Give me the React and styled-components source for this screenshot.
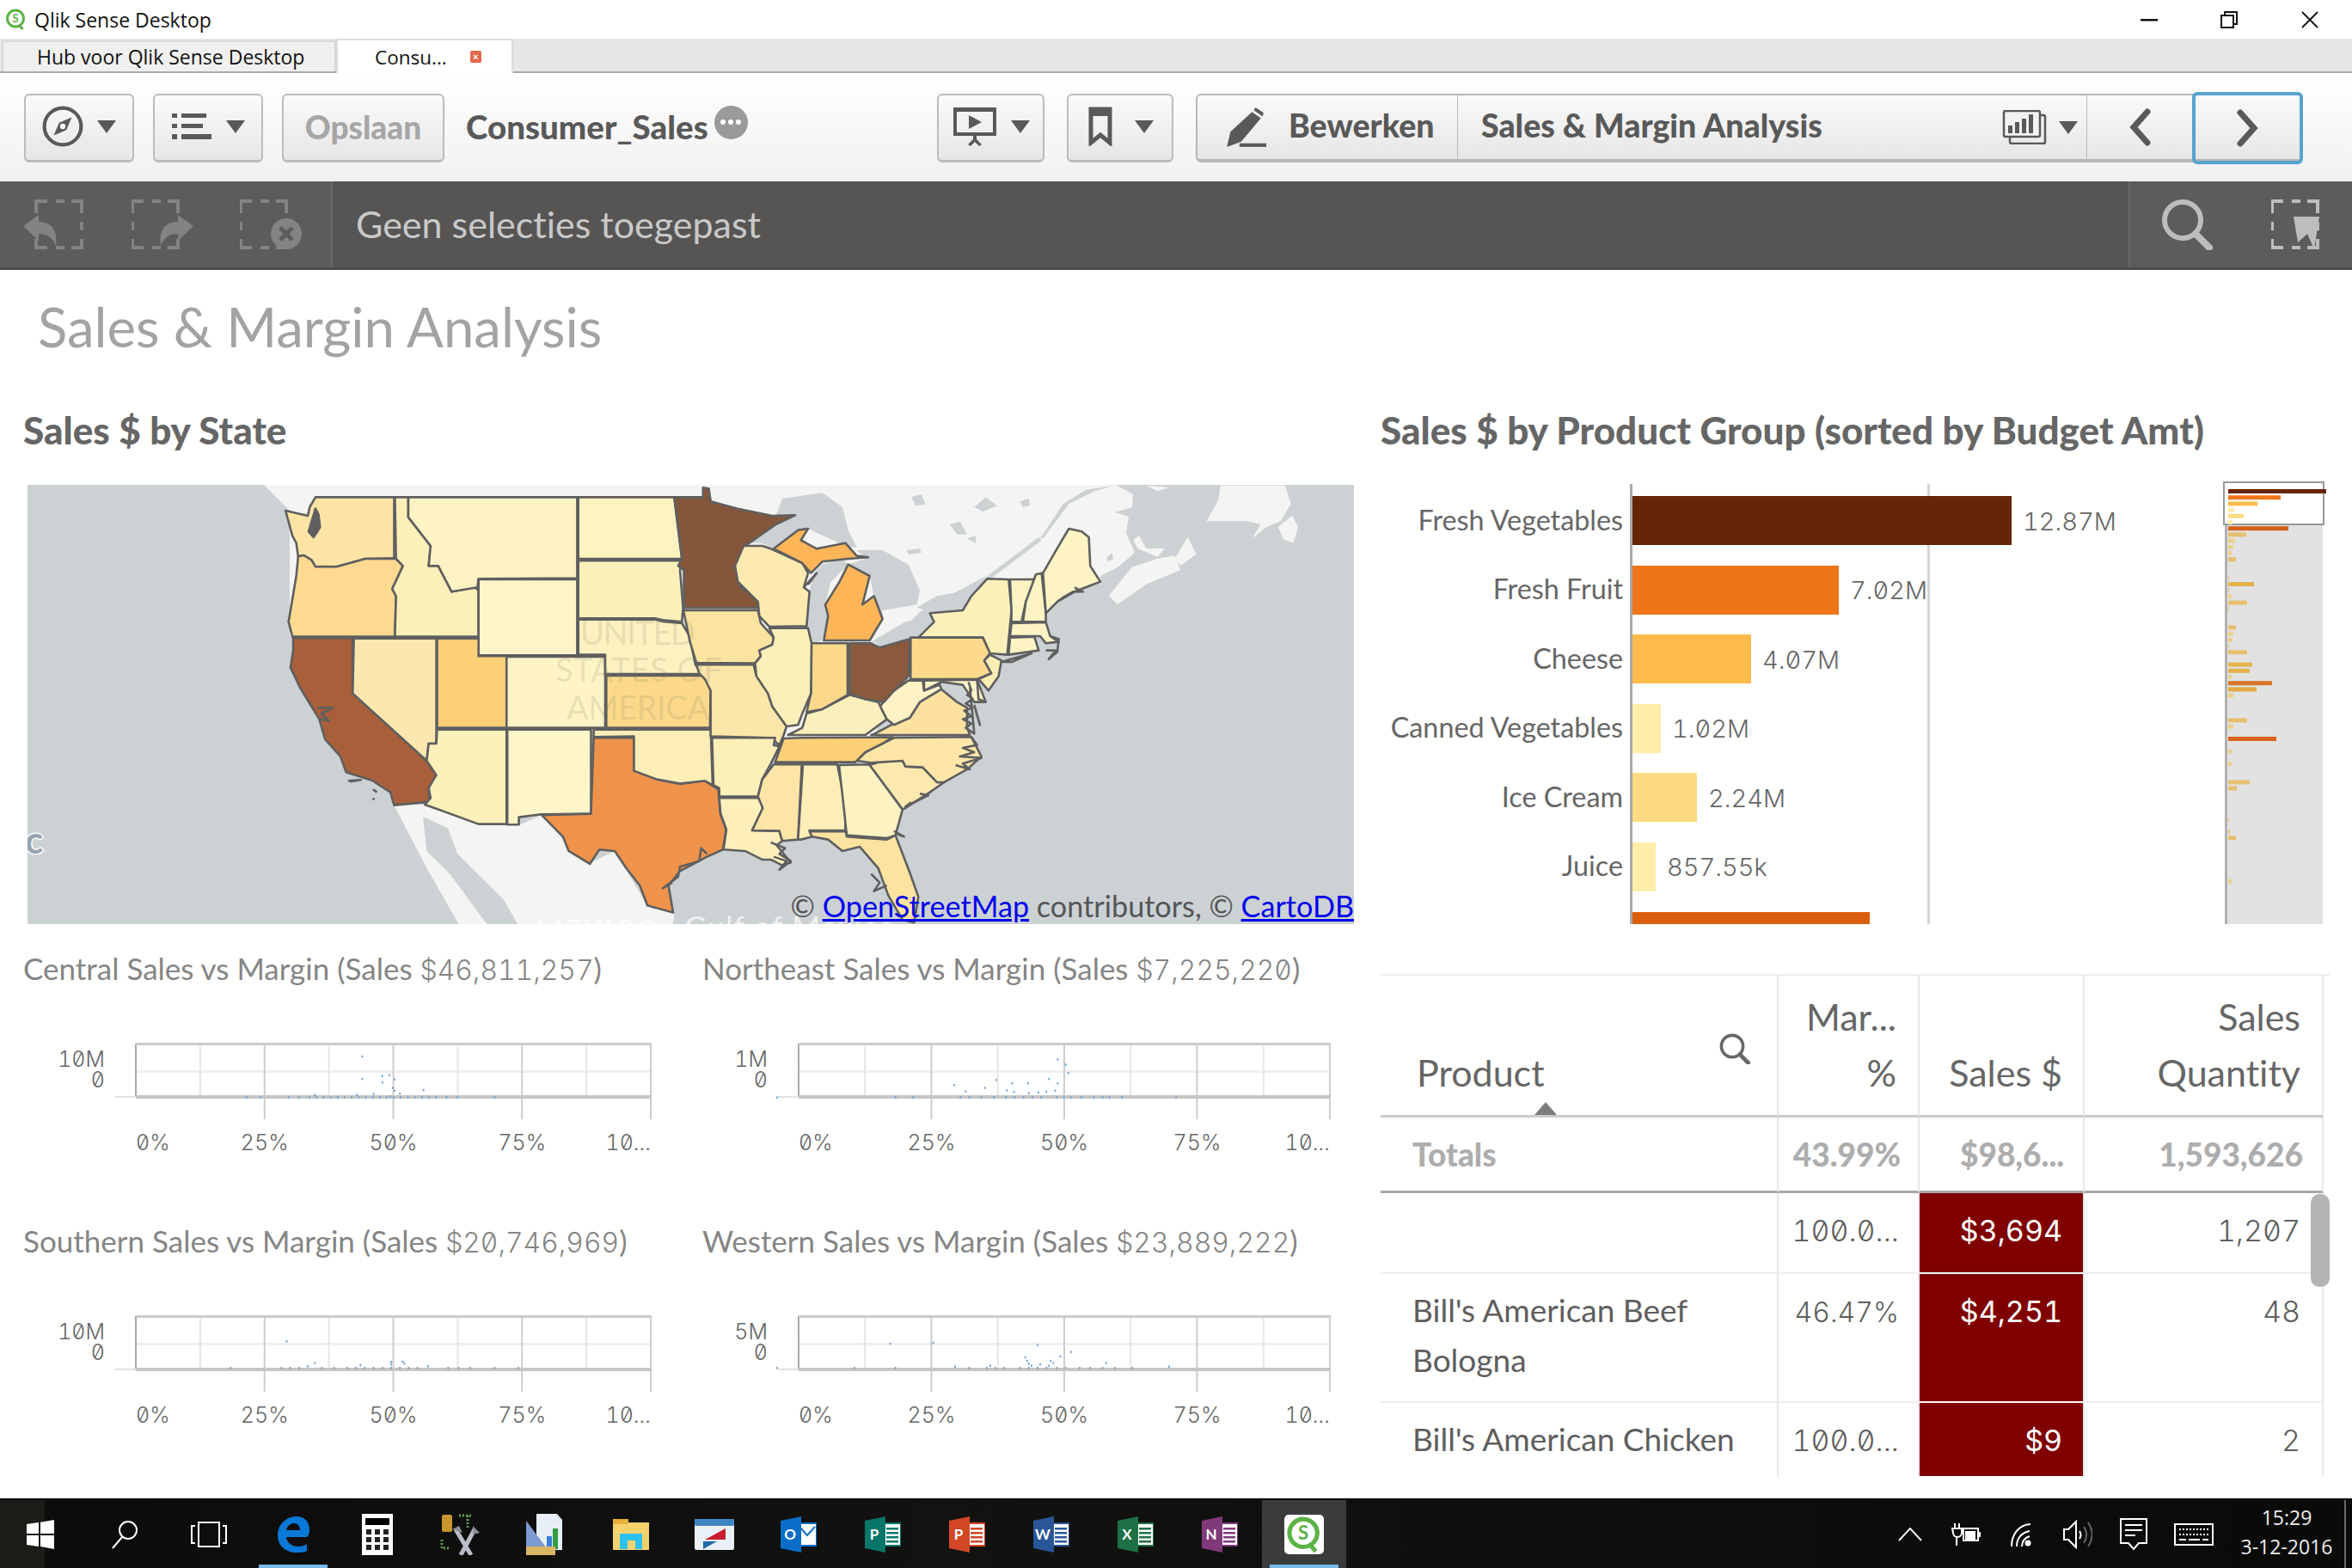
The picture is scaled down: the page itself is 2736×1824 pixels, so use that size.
import React from "react";
import styled, { createGlobalStyle } from "styled-components";

const GlobalStyle = createGlobalStyle`
  html, body {
    margin: 0;
    padding: 0;
    background: #fff;
  }
  * {
    box-sizing: border-box;
  }
`;

const SANS = `Lato, "Noto Sans", sans-serif`;
const NUMS = `Inter, "DejaVu Sans", sans-serif`;

const Root = styled.div`
  width: 2736px;
  height: 1824px;
  display: flex;
  flex-direction: column;
  overflow: hidden;
  font-family: ${SANS};
  font-variant-ligatures: none;
  color: #666;
`;

const Num = styled.span`
  font-family: ${NUMS};
  font-variant-numeric: tabular-nums slashed-zero;
  font-feature-settings: "zero", "tnum";
  font-size: ${(p) => p.$size || "0.91em"};
  font-weight: ${(p) => p.$weight || 300};
`;

/* window chrome */
const TitleBar = styled.div`
  height: 45px;
  flex: none;
  display: flex;
  align-items: center;
  padding-left: 5px;
  background: #fff;
  position: relative;
`;
const TitleText = styled.span`
  font-family: "Open Sans", sans-serif;
  font-size: 23px;
  color: #111;
  margin-left: 8px;
`;
const WinButtons = styled.div`
  margin-left: auto;
  display: flex;
  align-items: center;
  gap: 73px;
  padding-right: 38px;
`;
const TabBar = styled.div`
  height: 40px;
  flex: none;
  display: flex;
  align-items: flex-end;
  background: #e6e6e6;
  border-bottom: 2px solid #a8a8a8;
  padding-left: 2px;
`;
const HubTab = styled.div`
  width: 389px;
  height: 36px;
  background: #f0f0f0;
  border: 2px solid #d6d6d6;
  border-bottom: none;
  margin-bottom: 0;
  padding-left: 39px;
  font-family: "Open Sans", sans-serif;
  font-size: 23px;
  line-height: 34px;
  color: #111;
`;
const ActiveTab = styled.div`
  width: 206px;
  height: 40px;
  background: #fff;
  margin-bottom: -2px;
  border: 2px solid #dcdcdc;
  border-bottom: none;
  display: flex;
  align-items: center;
  padding-left: 43px;
  font-family: "Open Sans", sans-serif;
  font-size: 22.5px;
  color: #111;
`;
const TabClose = styled.span`
  width: 13px;
  height: 14px;
  margin-left: 27px;
  border-radius: 2px;
  background: #e2684c;
  color: #fff;
  font: bold 11px/14px "Liberation Sans", sans-serif;
  text-align: center;
`;

/* toolbar */
const Toolbar = styled.div`
  height: 126px;
  flex: none;
  display: flex;
  align-items: center;
  padding: 2px 57px 0 28px;
  background: linear-gradient(#ffffff, #f1f1f1);
`;
const ToolButton = styled.div`
  width: ${(p) => p.$w}px;
  height: 80px;
  margin-right: ${(p) => p.$gap || 22}px;
  display: flex;
  align-items: center;
  justify-content: center;
  gap: ${(p) => p.$inner || 16}px;
  padding-bottom: 3px;
  border: 2px solid #bcbcbc;
  border-bottom-width: 3px;
  border-radius: 6px;
  background: linear-gradient(#fafafa, #e6e6e6);
`;
const Caret = styled.i`
  width: 0;
  height: 0;
  border-left: 11px solid transparent;
  border-right: 11px solid transparent;
  border-top: 15px solid #595959;
`;
const SaveLabel = styled.span`
  font-size: 37px;
  font-weight: 900;
  color: #a6a6a6;
`;
const AppName = styled.span`
  font-size: 38.500px;
  font-weight: 900;
  color: #595959;
  margin: -5px 0 0 3px;
`;
const MoreDots = styled.span`
  width: 39px;
  height: 39px;
  margin: -14px 0 0 7px;
  border-radius: 50%;
  background: #9a9a9a;
  display: flex;
  align-items: center;
  justify-content: center;
  gap: 3px;
`;
const Dot = styled.i`
  width: 6px;
  height: 6px;
  border-radius: 50%;
  background: #fff;
`;
const ToolSpacer = styled.div`
  flex: 1;
`;
const NavGroup = styled.div`
  height: 80px;
  display: flex;
  border: 2px solid #b8b8b8;
  border-bottom-width: 4px;
  border-radius: 6px;
  background: linear-gradient(#fafafa, #e6e6e6);
  margin-left: 4px;
`;
const NavCell = styled.div`
  width: ${(p) => p.$w}px;
  display: flex;
  align-items: center;
  justify-content: ${(p) => p.$justify || "center"};
  padding: ${(p) => p.$pad || 0};
  border-right: ${(p) => (p.$line ? "1px solid #bbb" : "none")};
  font-size: 37.500px;
  font-weight: 900;
  color: #595959;
`;
const NavText = styled.span`
  margin: -5px 0 0 ${(p) => p.$left || 0}px;
`;
const SheetPicker = styled.span`
  display: flex;
  align-items: center;
  gap: 14px;
`;
const NextCell = styled(NavCell)`
  height: 84px;
  margin: -4px -2px -4px 0;
  border: 4px solid #55a3cf;
  border-radius: 6px;
`;

/* current selections */
const SelectionBar = styled.div`
  height: 103px;
  flex: none;
  display: flex;
  background: #565554;
  border-bottom: 3px solid #4a4a49;
`;
const SelTools = styled.div`
  width: 387px;
  display: flex;
  align-items: center;
  gap: 54px;
  padding-left: 27px;
  border-right: 2px solid #676766;
  background: #5c5c5b;
`;
const SelText = styled.div`
  flex: 1;
  padding-left: 27px;
  font-size: 43px;
  line-height: 100px;
  color: #c9c9c9;
`;
const SelRight = styled.div`
  width: 260px;
  display: flex;
  align-items: center;
  gap: 68px;
  padding-left: 36px;
  border-left: 2px solid #676766;
  background: #5c5c5b;
`;

/* sheet */
const Sheet = styled.div`
  flex: 1;
  min-height: 0;
  background: #fff;
`;
const SheetTitle = styled.h1`
  height: 136px;
  margin: 0;
  padding-left: 44px;
  font-size: 63.5px;
  font-weight: 400;
  line-height: 132px;
  color: #a3a3a3;
`;
const Columns = styled.div`
  display: flex;
  gap: 31px;
  padding-left: 27px;
`;
const LeftCol = styled.div`
  width: 1548px;
`;
const RightCol = styled.div`
  width: 1104px;
`;
const ChartTitle = styled.h2`
  height: 113px;
  margin: 0;
  font-size: 44px;
  font-weight: 900;
  line-height: 100px;
  color: #666;
`;
const MapFrame = styled.div`
  position: relative;
  width: 1543px;
  height: 511px;
  margin: 1px 0 0 5px;
  overflow: hidden;
  background: #ccd1d4;
`;
const Attribution = styled.div`
  position: absolute;
  right: 0;
  bottom: 0;
  font-size: 34.2px;
  line-height: 42px;
  color: #555;
  white-space: nowrap;
  a {
    color: #0000ee;
    text-decoration: underline;
  }
`;
const ScatterGrid = styled.div`
  display: grid;
  grid-template-columns: 790px 731px;
  grid-auto-rows: 317px;
  padding-top: 30px;
`;
const ScatterPanel = styled.div`
  display: flex;
  flex-direction: column;
`;
const ScatterTitle = styled.div`
  height: 46px;
  font-size: 35px;
  line-height: 42px;
  color: #858585;
  white-space: nowrap;
`;

/* bar chart */
const BarBlock = styled.div`
  display: flex;
  height: 512px;
`;
const BarsArea = styled.div`
  position: relative;
  width: 980px;
  height: 512px;
  padding-top: 14px;
  overflow: hidden;
  display: flex;
  flex-direction: column;
  gap: 23.6px;
`;
const AxisLine = styled.i`
  position: absolute;
  top: 0;
  bottom: 0;
  left: ${(p) => p.$x}px;
  width: 3px;
  background: ${(p) => p.$color};
`;
const BarRow = styled.div`
  position: relative;
  display: flex;
  align-items: center;
  height: 57px;
  flex: none;
`;
const BarLabel = styled.div`
  width: 282px;
  margin-top: -3px;
  text-align: right;
  font-size: 32.300px;
  color: #666;
  white-space: nowrap;
`;
const BarFill = styled.div`
  height: 57px;
  margin-left: 11px;
  background: ${(p) => p.$color};
`;
const BarValue = styled.div`
  margin: -3px 0 0 13px;
  font-size: 32px;
  color: #666;
`;

/* table */
const TableWrap = styled.div`
  position: relative;
  margin-top: 58px;
  width: 1104px;
  height: 584px;
  overflow: hidden;
  border-top: 2px solid #eee;
`;
const TableGrid = styled.div`
  display: grid;
  grid-template-columns: 463px 164px 192px 278px 7px;
  font-size: 37px;
`;
const Cell = styled.div`
  padding: 13px ${(p) => p.$padR || 25}px 19px ${(p) => p.$padL || 0}px;
  line-height: 58px;
  text-align: ${(p) => p.$align || "right"};
  color: #5e5e5e;
  border-right: 2px solid #e8e8e8;
  border-bottom: 2px solid #eee;
  background: ${(p) => p.$bg || "transparent"};
  ${(p) => p.$bg && "color: #fff; border-bottom-color: #fff;"}
`;
const HeadCell = styled(Cell)`
  height: 165px;
  padding-top: 0;
  padding-bottom: 17px;
  display: flex;
  flex-direction: column;
  justify-content: flex-end;
  position: relative;
  font-size: 43px;
  line-height: 65px;
  color: #666;
  border-bottom: 3px solid #ccc;
`;
const TotalCell = styled(Cell)`
  height: 88px;
  display: flex;
  align-items: center;
  justify-content: ${(p) => (p.$align === "left" ? "flex-start" : "flex-end")};
  padding-top: 0;
  padding-bottom: 0;
  font-weight: 900;
  color: #adadad;
  border-bottom: 3px solid #a8a8a8;
`;
const HeadSearch = styled.span`
  position: absolute;
  right: 31px;
  top: 54px;
`;
const SortMark = styled.i`
  position: absolute;
  left: 179px;
  bottom: 0;
  width: 0;
  height: 0;
  border-left: 13px solid transparent;
  border-right: 13px solid transparent;
  border-bottom: 15px solid #7d7d7d;
`;
const ScrollThumb = styled.div`
  position: absolute;
  left: 1082px;
  top: 254px;
  width: 22px;
  height: 108px;
  border-radius: 10px;
  background: #b4b4b4;
`;

/* taskbar */
const Taskbar = styled.div`
  height: 81px;
  flex: none;
  display: flex;
  background: linear-gradient(90deg, #1c1c18 0 52px, #0c0c0a 52px, #121210 40%, #0a0a09);
  border-top: 2px solid #000;
`;
const Slot = styled.div`
  position: relative;
  width: 98px;
  flex: none;
  display: flex;
  align-items: center;
  justify-content: center;
  background: ${(p) => (p.$focus ? "#3b3b3b" : "transparent")};
  ${(p) => p.$first && "margin-left: -2px;"}
  &::after {
    content: "";
    display: ${(p) => (p.$active ? "block" : "none")};
    position: absolute;
    left: 9px;
    right: 9px;
    bottom: 0;
    height: 4px;
    background: #76b9ed;
  }
`;
const Tray = styled.div`
  margin-left: auto;
  display: flex;
  align-items: center;
  height: 100%;
`;
const TraySlot = styled.div`
  width: ${(p) => p.$w || 65}px;
  display: flex;
  justify-content: center;
`;
const Clock = styled.div`
  width: 134px;
  margin-left: 3px;
  padding-bottom: 6px;
  text-align: center;
  font-family: "Open Sans", sans-serif;
  font-size: 23px;
  line-height: 34px;
  color: #eee;
`;
const DesktopEdge = styled.i`
  width: 2px;
  height: 100%;
  margin-right: 7px;
  background: #6a6a6a;
`;

/* ---------- icons ---------- */
const GREY = "#595959";

const QlikLogo = ({ size = 27, tile }) => (
  <svg width={size} height={size} viewBox="0 0 27 27">
    {tile && <rect x="0" y="0" width="27" height="27" rx="3" fill="#fff" />}
    <circle cx="13" cy="12.5" r="9.5" fill="none" stroke="#5cb246" strokeWidth="3" />
    <path d="M17 20l4.5 5" stroke="#5cb246" strokeWidth="3" />
    <text x="13" y="17" textAnchor="middle" fontSize="13" fontWeight="700" fontFamily="Lato" fill="#5cb246">S</text>
  </svg>
);

const CompassIcon = () => (
  <svg width="48" height="48" viewBox="0 0 46 46">
    <circle cx="23" cy="23" r="20.500" fill="none" stroke={GREY} strokeWidth="4" />
    <path d="M33 13l-6 14-14 6 6-14z" fill={GREY} />
    <circle cx="23" cy="23" r="3" fill="#fff" />
  </svg>
);
const ListIcon = () => (
  <svg width="48" height="30" viewBox="0 0 46 30" fill={GREY}>
    <rect x="0" y="0" width="6" height="5" />
    <rect x="11" y="0" width="29" height="5" />
    <rect x="0" y="12" width="6" height="5" />
    <rect x="11" y="12" width="25" height="5" />
    <rect x="0" y="24" width="6" height="6" />
    <rect x="11" y="24" width="35" height="6" />
  </svg>
);
const PresentIcon = () => (
  <svg width="52" height="46" viewBox="0 0 52 46" fill={GREY}>
    <path fillRule="evenodd" d="M1 1h50v33H1zM5 6v24h42V6z" />
    <path d="M19 10l15 8-15 8z" />
    <path d="M24 34h4v4l6 6-3 2-5-5-5 5-3-2 6-6z" />
  </svg>
);
const BookmarkIcon = () => (
  <svg width="32" height="46" viewBox="0 0 30 46">
    <path d="M4 3h22v39l-11-9-11 9z" fill="none" stroke={GREY} strokeWidth="5" />
    <rect x="2" y="1" width="26" height="10" rx="3" fill={GREY} />
  </svg>
);
const PenIcon = () => (
  <svg width="52" height="50" viewBox="0 0 50 46" fill={GREY}>
    <path d="M34 6l10 7-22 26-16 6 4-17z" />
    <path d="M38 1l9 6-1 4-10-7z" />
    <rect x="20" y="41" width="30" height="4" />
  </svg>
);
const SheetsIcon = () => (
  <svg width="52" height="40" viewBox="0 0 52 40" fill="none" stroke={GREY} strokeWidth="2.5">
    <rect x="9" y="6" width="41" height="33" rx="2" />
    <rect x="2" y="1" width="42" height="30" rx="2" fill="#f2f2f2" />
    <g fill={GREY} stroke="none">
      <rect x="7" y="18" width="5" height="9" />
      <rect x="15" y="14" width="5" height="13" />
      <rect x="23" y="10" width="5" height="17" />
      <rect x="31" y="5" width="5" height="22" />
    </g>
  </svg>
);
const Chevron = ({ dir }) => (
  <svg width="26" height="44" viewBox="0 0 26 44">
    <path
      d={dir === "left" ? "M22 4L6 22l16 18" : "M4 4l16 18L4 40"}
      fill="none"
      stroke={GREY}
      strokeWidth="7"
      strokeLinecap="round"
    />
  </svg>
);

const DashBox = ({ color, x = 0, y = 0, w = 56, h = 58 }) => (
  <g fill="none" stroke={color} strokeWidth="4">
    <path d={`M${x + 1} ${y + 16}V${y + 2}H${x + 14}M${x + 24} ${y + 2}H${x + 34}M${x + w - 14} ${y + 2}H${x + w - 2}V${y + 16}`} />
    <path d={`M${x + w - 2} ${y + 26}V${y + 36}M${x + 1} ${y + 26}V${y + 36}`} />
    <path d={`M${x + 1} ${y + 46}V${y + h - 2}H${x + 14}M${x + 24} ${y + h - 2}H${x + 34}M${x + w - 14} ${y + h - 2}H${x + w - 2}V${y + 46}`} />
  </g>
);
const UndoIcon = () => (
  <svg width="72" height="58" viewBox="0 0 72 58">
    <DashBox color="#838382" x={14} />
    <path d="M0 31L18 18v8c18 0 22 14 20 28-4-10-10-14-20-14v8z" fill="#838382" />
  </svg>
);
const RedoIcon = () => (
  <svg width="72" height="58" viewBox="0 0 72 58">
    <DashBox color="#838382" />
    <path d="M72 31L54 18v8c-18 0-22 14-20 28 4-10 10-14 20-14v8z" fill="#838382" />
  </svg>
);
const ClearIcon = () => (
  <svg width="72" height="58" viewBox="0 0 72 58">
    <DashBox color="#838382" />
    <circle cx="54" cy="40" r="18" fill="#838382" />
    <path d="M47 33l14 14M61 33L47 47" stroke="#5c5c5b" strokeWidth="5" />
  </svg>
);
const SearchIcon = ({ size = 60, color = "#bdbdbd", weight = 6 }) => (
  <svg width={size} height={size} viewBox="0 0 60 60" fill="none">
    <circle cx="25" cy="25" r="21" stroke={color} strokeWidth={weight} />
    <path d="M40 41l16 16" stroke={color} strokeWidth={weight + 2} strokeLinecap="round" />
  </svg>
);
const SelectToolIcon = () => (
  <svg width="58" height="58" viewBox="0 0 58 58">
    <DashBox color="#bdbdbd" />
    <path d="M26 20h30l-6 38-8-18-11 10z" fill="#bdbdbd" />
  </svg>
);

/* taskbar icons */
const WinIcon = () => (
  <svg width="32" height="34" viewBox="0 0 32 34" fill="#fff">
    <path d="M0 5l14-2v13H0zM16 2.700L32 0v16H16zM0 18h14v13L0 29zM16 18h16v16l-16-3z" />
  </svg>
);
const TaskSearch = () => (
  <svg width="32" height="34" viewBox="0 0 32 34" fill="none" stroke="#fff" strokeWidth="2">
    <circle cx="20" cy="12" r="10" />
    <path d="M13 20L2 33" />
  </svg>
);
const TaskView = () => (
  <svg width="42" height="30" viewBox="0 0 42 30" fill="none" stroke="#fff" strokeWidth="2">
    <rect x="9" y="1" width="24" height="28" />
    <path d="M5 5H1v20h4M37 5h4v20h-4" />
  </svg>
);
const EdgeIcon = () => (
  <svg width="40" height="42" viewBox="0 0 40 42" fill="#0a78d7">
    <path
      fillRule="evenodd"
      d="M36 24H12c1 8 8 11 14 11 4 0 8-1 10-3v8c-3 2-8 2-12 2C11 42 2 34 2 22 2 8 13 0 24 0c9 0 15 6 15 16 0 3-1 6-3 8zM28 16c0-5-3-8-7-8-4 0-8 3-9 8z"
    />
  </svg>
);
const CalcIcon = () => (
  <svg width="36" height="48" viewBox="0 0 36 48">
    <rect width="36" height="48" fill="#fff" />
    <rect x="4" y="5" width="28" height="8" fill="#000" />
    {[18, 27, 36].map((y) =>
      [5, 15, 25].map((x) => <rect key={`${x}-${y}`} x={x} y={y} width="6" height="6" fill="#222" />)
    )}
  </svg>
);
const ToolsIcon = () => (
  <svg width="50" height="48" viewBox="0 0 50 48">
    <rect x="2" y="1" width="12" height="20" rx="2" fill="#c8962e" />
    <path d="M22 2h14M32 2v14M2 30v10h10" stroke="#5f9e4f" strokeWidth="3" strokeDasharray="2 2" fill="none" />
    <path d="M18 18l18 30M40 18L24 48" stroke="#b7bec8" strokeWidth="5" />
    <path d="M14 18l8-4 4 8zM38 14l8 8-8 2z" fill="#8c8f96" />
  </svg>
);
const ChartDocIcon = () => (
  <svg width="46" height="48" viewBox="0 0 46 48">
    <path d="M12 0h24l6 7v35H12z" fill="#e8eef6" />
    <rect x="31" y="17" width="6" height="24" fill="#2f9e44" />
    <rect x="24" y="26" width="6" height="15" fill="#3b7dd8" />
    <path d="M0 8v32h24z" fill="#7d9bd1" />
    <rect x="0" y="38" width="34" height="10" fill="#d9b664" />
  </svg>
);
const FolderIcon = () => (
  <svg width="44" height="36" viewBox="0 0 44 36">
    <path d="M2 0h14l4 4h24v32H2z" fill="#f6d26f" />
    <rect x="2" y="0" width="18" height="6" fill="#e8b13c" />
    <path d="M10 17h26v18h-8V25h-9v10h-9z" fill="#2cc1f0" />
  </svg>
);
const BlueDocIcon = () => (
  <svg width="46" height="36" viewBox="0 0 46 36">
    <rect width="46" height="36" rx="2" fill="#eaf0f8" />
    <rect width="46" height="8" rx="2" fill="#3f86c6" />
    <path d="M36 11v13H12z" fill="#c8202e" />
    <path d="M10 26h16L10 35z" fill="#1f6aa8" />
  </svg>
);
const OfficeIcon = ({ color, letter, mail }) => (
  <svg width="42" height="42" viewBox="0 0 42 42">
    <rect x="20" y="8" width="22" height="26" fill="#fff" stroke={color} strokeWidth="2" />
    {!mail &&
      [13, 18, 23, 28].map((y) => <rect key={y} x="25" y={y} width="14" height="2.500" fill={color} />)}
    {mail && <path d="M22 12l9 10 9-10" fill="none" stroke={color} strokeWidth="2" />}
    <path d="M0 5L24 0v42L0 37z" fill={color} />
    <text x="11" y="27" textAnchor="middle" fontSize="17" fontWeight="700" fontFamily="Lato" fill="#fff">
      {letter}
    </text>
  </svg>
);

const TrayChevron = () => (
  <svg width="28" height="16" viewBox="0 0 28 16" fill="none" stroke="#eee" strokeWidth="2">
    <path d="M1 15L14 1l13 14" />
  </svg>
);
const TrayPower = () => (
  <svg width="34" height="26" viewBox="0 0 34 26" fill="none" stroke="#fff" strokeWidth="2">
    <path d="M4 0v6M9 0v6M1 6h11v5a5 5 0 0 1-10 0zM6 16v10" />
    <rect x="14" y="6" width="17" height="14" />
    <rect x="16" y="9" width="12" height="10" fill="#fff" stroke="none" />
    <rect x="32" y="10" width="2" height="6" fill="#fff" stroke="none" />
  </svg>
);
const TrayWifi = () => (
  <svg width="28" height="28" viewBox="0 0 28 28" fill="none" stroke="#fff" strokeWidth="2">
    <path d="M2 28C2 14 10 3 24 2" />
    <path d="M8 28c0-10 6-16 15-18" />
    <path d="M14 28c0-6 3-10 9-12" />
    <circle cx="21" cy="24" r="3.500" fill="#fff" stroke="none" />
  </svg>
);
const TrayVolume = () => (
  <svg width="34" height="34" viewBox="0 0 34 34" fill="none" stroke="#fff" strokeWidth="2">
    <path d="M1 11h5l9-9v30l-9-9H1z" />
    <path d="M19 13c2 3 2 6 0 9" />
    <path d="M24 8c4 6 4 13 0 19M29 3c6 9 6 19 0 28" stroke="#666" />
  </svg>
);
const TrayNote = () => (
  <svg width="32" height="38" viewBox="0 0 32 38" fill="none" stroke="#fff" strokeWidth="2">
    <path d="M1 1h30v28H22l-6 7-6-7H1z" />
    <path d="M6 8h20M6 14h20M6 20h12" />
  </svg>
);
const TrayKeyboard = () => (
  <svg width="46" height="26" viewBox="0 0 46 26" fill="none" stroke="#fff" strokeWidth="2">
    <rect x="1" y="1" width="44" height="24" />
    <path d="M6 7h34M6 13h34" strokeDasharray="2 2" />
    <path d="M6 19h8M17 19h13M33 19h7" />
  </svg>
);

/* ---------- map ---------- */
const WEST_STATES = [
  ["#fde4a4", "150,55 355,55 355,268 280,270 240,285 205,298 170,297 150,298 140,275 120,258 105,262 100,215 90,190 72,102 130,120 135,90"],
  ["#fdda8f", "105,262 120,258 140,275 150,298 205,298 280,270 360,270 378,295 350,375 360,400 357,542 90,542 80,490 100,330"],
  ["#a9603a", "92,547 247,547 247,740 440,975 465,1025 445,1080 448,1118 355,1130 345,1085 300,1045 230,1015 215,960 175,900 160,830 110,720 85,650 92,590"],
  ["#fde7ae", "250,548 465,548 465,915 445,915 440,975 247,740"],
  ["#fdefb8", "357,55 392,55 392,125 450,225 445,295 470,295 505,385 565,370 575,380 575,542 357,542 360,400 350,375 378,295 360,270"],
  ["#fdf3c3", "392,55 832,55 832,338 575,340 572,370 505,385 470,295 445,295 450,225 392,125"],
  ["#fff5c9", "575,342 832,342 832,607 575,607"],
  ["#fbd077", "467,548 575,548 575,610 648,610 648,860 467,860"],
  ["#fff4c6", "648,612 905,612 905,860 648,860"],
  ["#fdf0b9", "467,866 648,866 648,1196 575,1196 435,1128 450,1105 445,1070 465,1025 440,975 445,915 465,915"],
  ["#fff5c8", "650,866 868,866 868,1160 738,1162 680,1172 680,1198 650,1198"],
  ["#ef934b", "875,895 980,895 980,1010 1040,1040 1100,1055 1165,1045 1200,1075 1205,1160 1220,1215 1212,1285 1170,1310 1100,1360 1070,1410 1082,1505 1015,1480 995,1410 960,1350 930,1290 890,1285 865,1335 810,1290 795,1240 740,1165 868,1160"],
  ["#fdeeb8", "875,866 1180,866 1185,1060 1165,1045 1100,1055 1040,1040 980,1010 980,890 875,892"],
  ["#fff3c1", "835,55 1085,55 1105,270 835,270"],
  ["#fbf0ba", "835,277 1105,277 1100,310 1108,440 1105,490 1060,485 1035,478 835,478"],
  ["#fdf1c0", "835,482 1035,482 1060,490 1105,495 1125,540 1140,640 1165,672 905,672 905,605 835,605"],
  ["#fcd98a", "908,678 1165,678 1180,730 1178,860 908,860"],
  ["#85563a", "1085,55 1160,55 1160,22 1175,25 1180,70 1250,95 1340,120 1400,118 1350,150 1270,225 1250,290 1255,365 1300,410 1305,442 1110,442 1110,310 1095,295 1105,270"],
];

const EAST_STATES = [
  ["#fde3a0", "-15,450 245,450 255,495 300,545 295,570 250,590 255,610 235,635 30,633 8,560"],
  ["#fde6a9", "30,640 230,640 240,680 280,740 295,785 345,855 335,885 320,920 290,895 80,890 80,730 60,690 40,670"],
  ["#fdefb8", "85,895 305,895 300,920 320,925 290,985 260,1040 245,1100 110,1100 110,1070 90,1060"],
  ["#fff0bb", "110,1105 250,1105 262,1140 225,1218 320,1220 330,1255 310,1270 360,1330 330,1340 290,1320 260,1320 200,1290 125,1285 135,1215 115,1160"],
  ["#fde5a7", "300,988 398,988 385,1250 330,1255 320,1220 225,1218 262,1140 245,1100 260,1040"],
  ["#fdeeb8", "402,988 522,988 552,1135 550,1218 425,1218 435,1240 395,1250 385,1250"],
  ["#fdf2c0", "528,990 635,988 680,1050 750,1145 725,1235 695,1245 555,1235 545,1140"],
  ["#fde3a0", "425,1222 552,1222 555,1240 695,1250 725,1235 775,1365 805,1450 790,1540 750,1530 700,1445 665,1350 600,1275 540,1290 490,1250 435,1240"],
  ["#fde9ae", "635,990 680,975 750,975 760,995 820,998 870,1050 895,1050 845,1085 760,1140 750,1145 680,1050"],
  ["#fde6a8", "590,975 620,945 720,895 990,892 1025,960 975,1005 895,1050 870,1050 820,998 760,995 750,975 640,982"],
  ["#fbd077", "335,897 400,895 715,893 680,915 620,945 585,980 305,980"],
  ["#fbf0bb", "350,885 400,860 415,810 470,795 565,745 620,760 665,770 695,830 620,885"],
  ["#fde1a0", "650,882 720,845 775,825 810,770 885,725 940,770 975,790 975,860 985,885 640,885"],
  ["#fff3c6", "672,785 700,745 770,695 820,695 825,730 880,710 885,725 810,770 775,825 720,850 695,830"],
  ["#8b5a3c", "565,565 640,565 670,580 775,550 770,680 720,730 685,770 620,760 565,740"],
  ["#fcd98a", "432,565 558,565 558,745 470,795 415,805 430,740"],
  ["#fdefba", "285,512 420,512 432,565 430,740 400,810 385,850 345,855 295,785 280,740 240,680 235,635 255,610 250,590 295,570 300,545"],
  ["#fdeaae", "195,225 260,225 290,235 400,285 420,320 405,370 425,385 415,505 285,507 250,470 245,420 175,350 165,295"],
  ["#fdb557", "300,235 385,170 420,165 395,205 450,235 550,215 590,260 630,265 560,270 470,280 430,320 400,285"],
  ["#fdb557", "475,555 490,470 480,430 530,350 560,290 635,330 610,430 650,400 680,480 635,555"],
  ["#fcf0ba", "805,545 860,490 845,460 960,450 990,400 1045,340 1120,342 1130,450 1115,605 1055,600 1030,545"],
  ["#fdd98c", "778,545 1030,545 1055,600 1035,625 1060,670 1010,690 778,690"],
  ["#fdeeb4", "1055,605 1095,625 1085,680 1050,730 1015,690 1060,670 1035,625"],
  ["#fff5c8", "825,695 1010,692 1040,770 1000,770 960,710 885,700 825,730"],
  ["#fdf3c3", "1125,342 1215,342 1180,420 1165,490 1130,490 1130,450"],
  ["#fdf3c3", "1215,325 1235,320 1250,460 1250,490 1170,490 1180,420"],
  ["#fdf3c3", "1240,320 1280,250 1330,165 1375,175 1400,195 1405,295 1440,350 1350,385 1290,420 1250,460"],
  ["#fdf3c3", "1130,495 1250,492 1265,540 1295,560 1250,565 1230,540 1125,540"],
  ["#fdf3c3", "1125,545 1210,542 1225,590 1120,605"],
  ["#fdf3c3", "1095,630 1200,600 1130,630"],
];

const EAST_COAST = [
  "980,700 990,730 975,745 995,760 970,775 995,790 965,800 990,820 960,830 990,845 970,860 1000,880 985,720",
  "1010,695 1015,760 1040,770",
  "1000,780 1020,850 1005,800",
  "990,892 1010,920 960,930 1000,945 950,960 1025,965 960,985 985,1005 935,990",
  "290,1260 340,1280 320,1300 360,1325 320,1355 345,1325 300,1310",
  "640,1370 670,1400 650,1430 695,1410",
  "720,1220 755,1240 730,1230",
  "1265,540 1295,550 1290,595 1260,620 1285,590 1250,590",
  "1290,420 1310,405 1345,385 1380,385 1350,370",
  "810,1090 840,1095 760,1135 780,1120",
  "405,370 450,320 420,360",
];
const WEST_COAST = [
  "155,790 195,790 165,810 185,835 160,830",
  "235,1045 268,1042 240,1048",
  "300,1075 310,1085",
  "300,1105 303,1112",
  "1170,1300 1155,1280 1150,1325 1100,1345 1095,1380 1055,1420 1080,1400",
];
const LAKES = [
  "215,215 300,140 330,60 470,40 540,90 560,170 590,230 560,230 420,165 300,235 260,215",
  "420,560 415,420 440,320 470,290 540,270 560,290 500,350 480,430 490,480 470,555 440,565",
  "590,240 680,240 770,290 810,380 800,430 680,450 680,480 650,400 635,330 560,290 620,270",
  "640,560 690,570 775,545 860,480 850,470 760,490",
  "800,440 870,400 980,380 985,420 945,450 850,455",
  "1000,90 1040,55 1080,85 1030,105",
  "915,150 950,140 975,185 940,185",
  "975,200 1005,190 1005,215",
  "1160,70 1190,60 1195,85 1170,90",
  "765,240 810,235 815,250 770,255",
  "780,55 815,45 830,80 795,85",
];
/* Atlantic Canada, coordinates of the north-east crop */
const ATLANTIC = [
  "660,5 885,5 905,70 870,130 820,150 770,190 800,140 750,130 610,130 650,60",
  "860,150 910,110 930,150 915,205 880,195",
  "270,390 350,290 440,260 500,250 520,300 400,350 300,420",
  "500,260 545,185 575,245 520,285",
  "355,195 375,180 400,225 465,225 440,255 370,225",
  "400,5 480,12 440,25",
];

const WATER = "#ccd1d4";
const LAND = "#f4f4f2";
const toEast = "translate(800 560) scale(0.3333 0.3333)";
const toWest = "translate(300 560) scale(0.4464 0.3333)";
const toNorthEast = "translate(1200 563) scale(0.3333 0.3333)";

const UsMap = () => (
  <svg width="1543" height="511" viewBox="32 564 1543 511" style={{ display: "block" }}>
    {/* land */}
    <polygon
      fill={LAND}
      points="306,563 1296,563 1318,575 1317,590 1297,596 1313,601 1310,620 1320,643 1300,660 1280,670 1280,678 1143,672 1071,711 1041,740 1020,747 1020,860 710,860 337,740 337,594"
    />
    <g transform={toWest} fill={LAND}>
      <polygon points="355,1130 435,1128 575,1200 680,1200 740,1165 860,1335 930,1290 1015,1480 1085,1510 1080,1560 530,1560 440,1350" />
      <polygon fill={WATER} points="430,1170 495,1210 520,1300 640,1460 680,1551 600,1551 500,1370 440,1290" />
    </g>
    <g transform={toEast}>
      {LAKES.map((p, i) => (
        <polygon key={i} points={p} fill={WATER} />
      ))}
      <polyline points="990,400 1045,340 1230,200" fill="none" stroke={WATER} strokeWidth="5" vectorEffect="non-scaling-stroke" />
    </g>
    <g transform={toNorthEast} fill={LAND}>
      {ATLANTIC.map((p, i) => (
        <polygon key={i} points={p} />
      ))}
      <polygon fill={WATER} points="290,5 190,20 110,70 70,130 30,190 40,190 100,110 130,70 220,25" />
      <polygon fill={WATER} points="262,258 282,240 285,262 268,270" />
    </g>
    {/* states */}
    <g transform={toWest} stroke="#5f5f5f" strokeWidth="2.600" strokeLinejoin="round">
      {WEST_STATES.map(([fill, p], i) => (
        <polygon key={i} points={p} fill={fill} vectorEffect="non-scaling-stroke" />
      ))}
      <polygon points="150,95 132,175 145,195 162,160 158,115" fill="#5f5f5f" vectorEffect="non-scaling-stroke" />
      {WEST_COAST.map((p, i) => (
        <polyline key={i} points={p} fill="none" vectorEffect="non-scaling-stroke" />
      ))}
    </g>
    <g transform={toEast} stroke="#5f5f5f" strokeWidth="2.600" strokeLinejoin="round">
      {EAST_STATES.map(([fill, p], i) => (
        <polygon key={i} points={p} fill={fill} vectorEffect="non-scaling-stroke" />
      ))}
      {EAST_COAST.map((p, i) => (
        <polyline key={i} points={p} fill="none" vectorEffect="non-scaling-stroke" />
      ))}
    </g>
    {/* base map labels */}
    <g fontFamily="Lato" fill="#6c7a58" fillOpacity="0.16" textAnchor="middle" fontSize="38">
      <text x="742" y="750" textLength="134">UNITED</text>
      <text x="743" y="793" textLength="194">STATES OF</text>
      <text x="742" y="837" textLength="166">AMERICA</text>
    </g>
    <g fontFamily="Lato" fill="#fff" fillOpacity="0.7" fontSize="36" letterSpacing="1">
      <text x="622" y="1096">MEXICO</text>
      <text x="796" y="1092">Gulf of Mexico</text>
    </g>
    <text x="29" y="993" fontFamily="Lato" fontSize="44" fontWeight="700" fill="#98a3ad" stroke="#fff" strokeWidth="3" paintOrder="stroke">c</text>
  </svg>
);

/* ---------- bars ---------- */
const BARS = [
  { label: "Fresh Vegetables", value: "12.87M", width: 441, color: "#662506" },
  { label: "Fresh Fruit", value: "7.02M", width: 240, color: "#ee7518" },
  { label: "Cheese", value: "4.07M", width: 138, color: "#fdbb4b" },
  { label: "Canned Vegetables", value: "1.02M", width: 33, color: "#ffedaa" },
  { label: "Ice Cream", value: "2.24M", width: 75, color: "#fedb80" },
  { label: "Juice", value: "857.55k", width: 27, color: "#ffedaa" },
  { label: "", value: "", width: 276, color: "#d95f0e" },
];

const T = "#e7c06f";
const MINI = [
  [114, "#662506"], [61, "#ee7518"], [34, "#fdbb4b"], [7, "#ffedaa"], [18, "#fedb80"], [5, "#ffedaa"],
  [70, "#d2611c"], [21, T], [8, "#ebd189"], [6, "#ebd189"], [4, "#ebd189"], [9, T], [0], [0], [1, T],
  [30, "#e4b34e"], [1, T], [4, "#ebd189"], [22, T], [1, T], [0], [0], [9, T], [6, "#ebd189"], [5, "#ebd189"],
  [1, T], [22, T], [0], [28, "#e4b34e"], [25, "#e4b34e"], [4, "#ebd189"], [51, "#d9762a"], [33, "#e3a943"],
  [6, "#ebd189"], [0], [0], [0], [22, T], [6, "#ebd189"], [0], [56, "#d9651a"], [0], [4, "#ebd189"], [0],
  [4, "#ebd189"], [0], [0], [25, T], [10, T], [0], [0], [0], [0], [1, T], [0], [2, T], [9, T], [0], [0], [0],
  [0], [0], [0], [4, "#ebd189"],
];

const MiniChart = () => (
  <svg width="124" height="515" viewBox="0 0 124 515" style={{ display: "block", marginTop: -3 }}>
    <rect x="2" y="3" width="114" height="512" fill="#e2e2e2" />
    <rect x="2" y="3" width="3" height="512" fill="#b0b0b0" />
    <rect x="1" y="1" width="116" height="49" fill="#fff" stroke="#999" strokeWidth="2" />
    {MINI.map(([w, c], i) =>
      w ? <rect key={i} x="6" y={9 + i * 7.2} width={w} height="5" fill={c} /> : null
    )}
  </svg>
);

/* ---------- scatter ---------- */
const baseline = (xs) => xs.map((x) => [x, 447]);

const SCATTERS = [
  {
    title: "Central Sales vs Margin (Sales ",
    sum: "$46,811,257",
    top: "10M",
    plotLeft: 131,
    labelRight: 95,
    originX: 27,
    originY: 1151,
    dots: [
      [412, 332], [412, 395], [435, 387], [443, 384], [435, 405], [449, 396], [447, 420], [449, 428],
      [482, 426], [455, 436], [425, 437], [406, 440], [358, 440], [444, 444],
      ...baseline([280, 296, 328, 340, 352, 360, 368, 376, 384, 392, 400, 408, 416, 424, 432, 440, 448, 456, 464, 472, 480, 488, 496, 508, 520, 563]),
    ],
  },
  {
    title: "Northeast Sales vs Margin (Sales ",
    sum: "$7,225,220",
    top: "1M",
    plotLeft: 112,
    labelRight: 76,
    originX: 817,
    originY: 1151,
    dots: [
      [1205, 340], [1214, 355], [1217, 378], [1195, 395], [1135, 398], [1153, 407], [1171, 407], [1205, 407],
      [1087, 412], [1122, 420], [1100, 430], [1147, 427], [1155, 431], [1172, 435], [1183, 433], [1192, 430], [1202, 428],
      ...baseline([885, 1020, 1040, 1094, 1104, 1118, 1132, 1146, 1156, 1166, 1176, 1186, 1204, 1212, 1220, 1232, 1246, 1256, 1264, 1278, 1340]),
    ],
  },
  {
    title: "Southern Sales vs Margin (Sales ",
    sum: "$20,746,969",
    top: "10M",
    plotLeft: 131,
    labelRight: 95,
    originX: 27,
    originY: 1470,
    dots: [
      [326, 1135], [358, 1196], [445, 1193], [458, 1192], [460, 1197], [350, 1205], [410, 1202], [445, 1200], [487, 1205],
      ...[262, 320, 330, 340, 366, 380, 395, 405, 415, 425, 435, 445, 455, 465, 475, 510, 522, 535, 563, 590].map((x) => [x, 1210]),
    ],
  },
  {
    title: "Western Sales vs Margin (Sales ",
    sum: "$23,889,222",
    top: "5M",
    plotLeft: 112,
    labelRight: 76,
    originX: 817,
    originY: 1470,
    dots: [
      [1014, 1142], [1063, 1140], [1182, 1146], [1220, 1165], [1168, 1180], [1208, 1178], [1170, 1190], [1197, 1190],
      [1200, 1196], [1172, 1198], [1185, 1200], [1260, 1196], [1175, 1204], [1195, 1204], [1128, 1204], [1088, 1206], [1332, 1206],
      ...[885, 973, 1020, 1104, 1124, 1134, 1144, 1162, 1172, 1182, 1192, 1204, 1214, 1230, 1242, 1256, 1270, 1290].map((x) => [x, 1210]),
    ],
  },
];

const ScatterChart = ({ top, plotLeft, labelRight, originX, originY, dots }) => {
  const right = 730;
  const step = (right - plotLeft) / 8;
  const grid = [1, 2, 3, 4, 5, 6, 7, 8];
  const ticks = ["25%", "50%", "75%"];
  return (
    <svg width="790" height="241" viewBox="0 0 790 241" style={{ display: "block" }}>
      <rect x={plotLeft} y="94" width={right - plotLeft} height="3" fill="#efefef" />
      {grid.map((i) => (
        <rect
          key={i}
          x={plotLeft + i * step - 1}
          y="63"
          width="2"
          height={i % 2 === 0 ? 88 : 62}
          fill={i % 2 === 0 ? "#cdcdcd" : "#e6e6e6"}
        />
      ))}
      <rect x={plotLeft - 1} y="63" width="2" height="62" fill="#aaa" />
      <rect x={plotLeft} y="62" width={right - plotLeft + 1} height="3" fill="#cbcbcb" />
      <rect x={plotLeft} y="123" width={right - plotLeft + 1} height="4" fill="#c6c6c6" />
      <rect x={plotLeft - 24} y="124" width="24" height="2" fill="#e0e0e0" />
      {dots.map(([x, y], i) => (
        <rect
          key={i}
          x={x / 0.98 - originX}
          y={1090 + y / 2.41 - originY}
          width="1.800"
          height="2.500"
          fill="#6f9fd0"
        />
      ))}
      <g
        fontFamily="Inter"
        fontSize="25"
        fontWeight="300"
        fill="#666"
        style={{ fontVariantNumeric: "tabular-nums slashed-zero", fontFeatureSettings: '"zero","tnum"' }}
      >
        <text x={labelRight} y="90" textAnchor="end">{top}</text>
        <text x={labelRight} y="114" textAnchor="end">0</text>
        <text x={plotLeft} y="187">0%</text>
        {ticks.map((t, i) => (
          <text key={t} x={plotLeft + (i + 1) * 2 * step} y="187" textAnchor="middle">{t}</text>
        ))}
        <text x={right} y="187" textAnchor="end">10...</text>
      </g>
    </svg>
  );
};

/* ---------- taskbar data ---------- */
const TASK_ITEMS = [
  <WinIcon key="win" />,
  <TaskSearch key="search" />,
  <TaskView key="view" />,
  <EdgeIcon key="edge" />,
  <CalcIcon key="calc" />,
  <ToolsIcon key="tools" />,
  <ChartDocIcon key="chart" />,
  <FolderIcon key="folder" />,
  <BlueDocIcon key="blue" />,
  <OfficeIcon key="o" color="#0a6ec8" letter="O" mail />,
  <OfficeIcon key="p" color="#077568" letter="P" />,
  <OfficeIcon key="pp" color="#d24726" letter="P" />,
  <OfficeIcon key="w" color="#2a5699" letter="W" />,
  <OfficeIcon key="x" color="#1e7145" letter="X" />,
  <OfficeIcon key="n" color="#80397b" letter="N" />,
  <QlikLogo key="qlik" size={46} tile />,
];

export default function App() {
  return (
    <Root>
      <GlobalStyle />
      <TitleBar>
        <QlikLogo />
        <TitleText>Qlik Sense Desktop</TitleText>
        <WinButtons>
          <svg width="20" height="4"><rect width="20" height="2.500" y="1" fill="#111" /></svg>
          <svg width="20" height="20" fill="none" stroke="#111" strokeWidth="2">
            <rect x="1" y="5" width="14" height="14" />
            <path d="M5 5V1h14v14h-4" />
          </svg>
          <svg width="22" height="22" stroke="#111" strokeWidth="1.800">
            <path d="M2 2l18 18M20 2L2 20" />
          </svg>
        </WinButtons>
      </TitleBar>
      <TabBar>
        <HubTab>Hub voor Qlik Sense Desktop</HubTab>
        <ActiveTab>
          Consu...
          <TabClose>×</TabClose>
        </ActiveTab>
      </TabBar>
      <Toolbar>
        <ToolButton $w={128}><CompassIcon /><Caret /></ToolButton>
        <ToolButton $w={128}><ListIcon /><Caret /></ToolButton>
        <ToolButton $w={189}><SaveLabel>Opslaan</SaveLabel></ToolButton>
        <AppName>Consumer_Sales</AppName>
        <MoreDots><Dot /><Dot /><Dot /></MoreDots>
        <ToolSpacer />
        <ToolButton $w={125} $gap={26}><PresentIcon /><Caret /></ToolButton>
        <ToolButton $w={124} $gap={22} $inner={24}><BookmarkIcon /><Caret /></ToolButton>
        <NavGroup>
          <NavCell $w={303} $line $justify="flex-start" $pad="0 0 0 28px">
            <PenIcon />
            <NavText $left={26}>Bewerken</NavText>
          </NavCell>
          <NavCell $w={732} $line $justify="space-between" $pad="0 10px 0 27px">
            <NavText>Sales &amp; Margin Analysis</NavText>
            <SheetPicker>
              <SheetsIcon />
              <Caret />
            </SheetPicker>
          </NavCell>
          <NavCell $w={122}><Chevron dir="left" /></NavCell>
          <NextCell $w={129}><Chevron dir="right" /></NextCell>
        </NavGroup>
      </Toolbar>
      <SelectionBar>
        <SelTools>
          <UndoIcon />
          <RedoIcon />
          <ClearIcon />
        </SelTools>
        <SelText>Geen selecties toegepast</SelText>
        <SelRight>
          <SearchIcon />
          <SelectToolIcon />
        </SelRight>
      </SelectionBar>
      <Sheet>
        <SheetTitle>Sales &amp; Margin Analysis</SheetTitle>
        <Columns>
          <LeftCol>
            <ChartTitle>Sales $ by State</ChartTitle>
            <MapFrame>
              <UsMap />
              <Attribution>
                © <a href="#osm">OpenStreetMap</a> contributors, © <a href="#carto">CartoDB</a>
              </Attribution>
            </MapFrame>
            <ScatterGrid>
              {SCATTERS.map((s) => (
                <ScatterPanel key={s.title}>
                  <ScatterTitle>
                    {s.title}
                    <Num>{s.sum}</Num>)
                  </ScatterTitle>
                  <ScatterChart {...s} />
                </ScatterPanel>
              ))}
            </ScatterGrid>
          </LeftCol>
          <RightCol>
            <ChartTitle>Sales $ by Product Group (sorted by Budget Amt)</ChartTitle>
            <BarBlock>
              <BarsArea>
                <AxisLine $x={636} $color="#d4d4d4" />
                <AxisLine $x={290} $color="#a8a8a8" />
                {BARS.map((b, i) => (
                  <BarRow key={i}>
                    <BarLabel>{b.label}</BarLabel>
                    <BarFill $color={b.color} style={{ width: b.width }} />
                    <BarValue><Num $size="29px">{b.value}</Num></BarValue>
                  </BarRow>
                ))}
              </BarsArea>
              <MiniChart />
            </BarBlock>
            <TableWrap>
              <TableGrid>
                <HeadCell $align="left" $padL={42}>
                  Product
                  <HeadSearch><SearchIcon size={36} color="#666" weight={6} /></HeadSearch>
                  <SortMark />
                </HeadCell>
                <HeadCell><span>Mar...</span><span>%</span></HeadCell>
                <HeadCell $padR={24}>Sales $</HeadCell>
                <HeadCell><span>Sales</span><span>Quantity</span></HeadCell>
                <span />

                <TotalCell $align="left" $padL={37}>Totals</TotalCell>
                <TotalCell $padR={20}>43.99%</TotalCell>
                <TotalCell $padR={22}>$98,6...</TotalCell>
                <TotalCell $padR={22}>1,593,626</TotalCell>
                <span />

                <Cell $align="left" $padL={37}>&nbsp;</Cell>
                <Cell $padR={22}><Num $size="34px">100.0...</Num></Cell>
                <Cell $bg="#800000" $padR={24}><Num $size="34px" $weight={400}>$3,694</Num></Cell>
                <Cell><Num $size="34px">1,207</Num></Cell>
                <span />

                <Cell $align="left" $padL={37} $padR={40}>Bill's American Beef Bologna</Cell>
                <Cell $padR={22}><Num $size="32px">46.47%</Num></Cell>
                <Cell $bg="#800000" $padR={24}><Num $size="34px" $weight={400}>$4,251</Num></Cell>
                <Cell><Num $size="34px">48</Num></Cell>
                <span />

                <Cell $align="left" $padL={37} $padR={10}>Bill's American Chicken</Cell>
                <Cell $padR={22}><Num $size="34px">100.0...</Num></Cell>
                <Cell $bg="#800000" $padR={24}><Num $size="34px" $weight={400}>$9</Num></Cell>
                <Cell><Num $size="34px">2</Num></Cell>
                <span />
              </TableGrid>
              <ScrollThumb />
            </TableWrap>
          </RightCol>
        </Columns>
      </Sheet>
      <Taskbar>
        {TASK_ITEMS.map((icon, i) => (
          <Slot key={i} $first={i === 0} $active={i === 3 || i === 15} $focus={i === 15}>
            {icon}
          </Slot>
        ))}
        <Tray>
          <TraySlot><TrayChevron /></TraySlot>
          <TraySlot><TrayPower /></TraySlot>
          <TraySlot><TrayWifi /></TraySlot>
          <TraySlot><TrayVolume /></TraySlot>
          <TraySlot><TrayNote /></TraySlot>
          <TraySlot $w={76}><TrayKeyboard /></TraySlot>
          <Clock>
            15:29
            <br />
            3-12-2016
          </Clock>
          <DesktopEdge />
        </Tray>
      </Taskbar>
    </Root>
  );
}
